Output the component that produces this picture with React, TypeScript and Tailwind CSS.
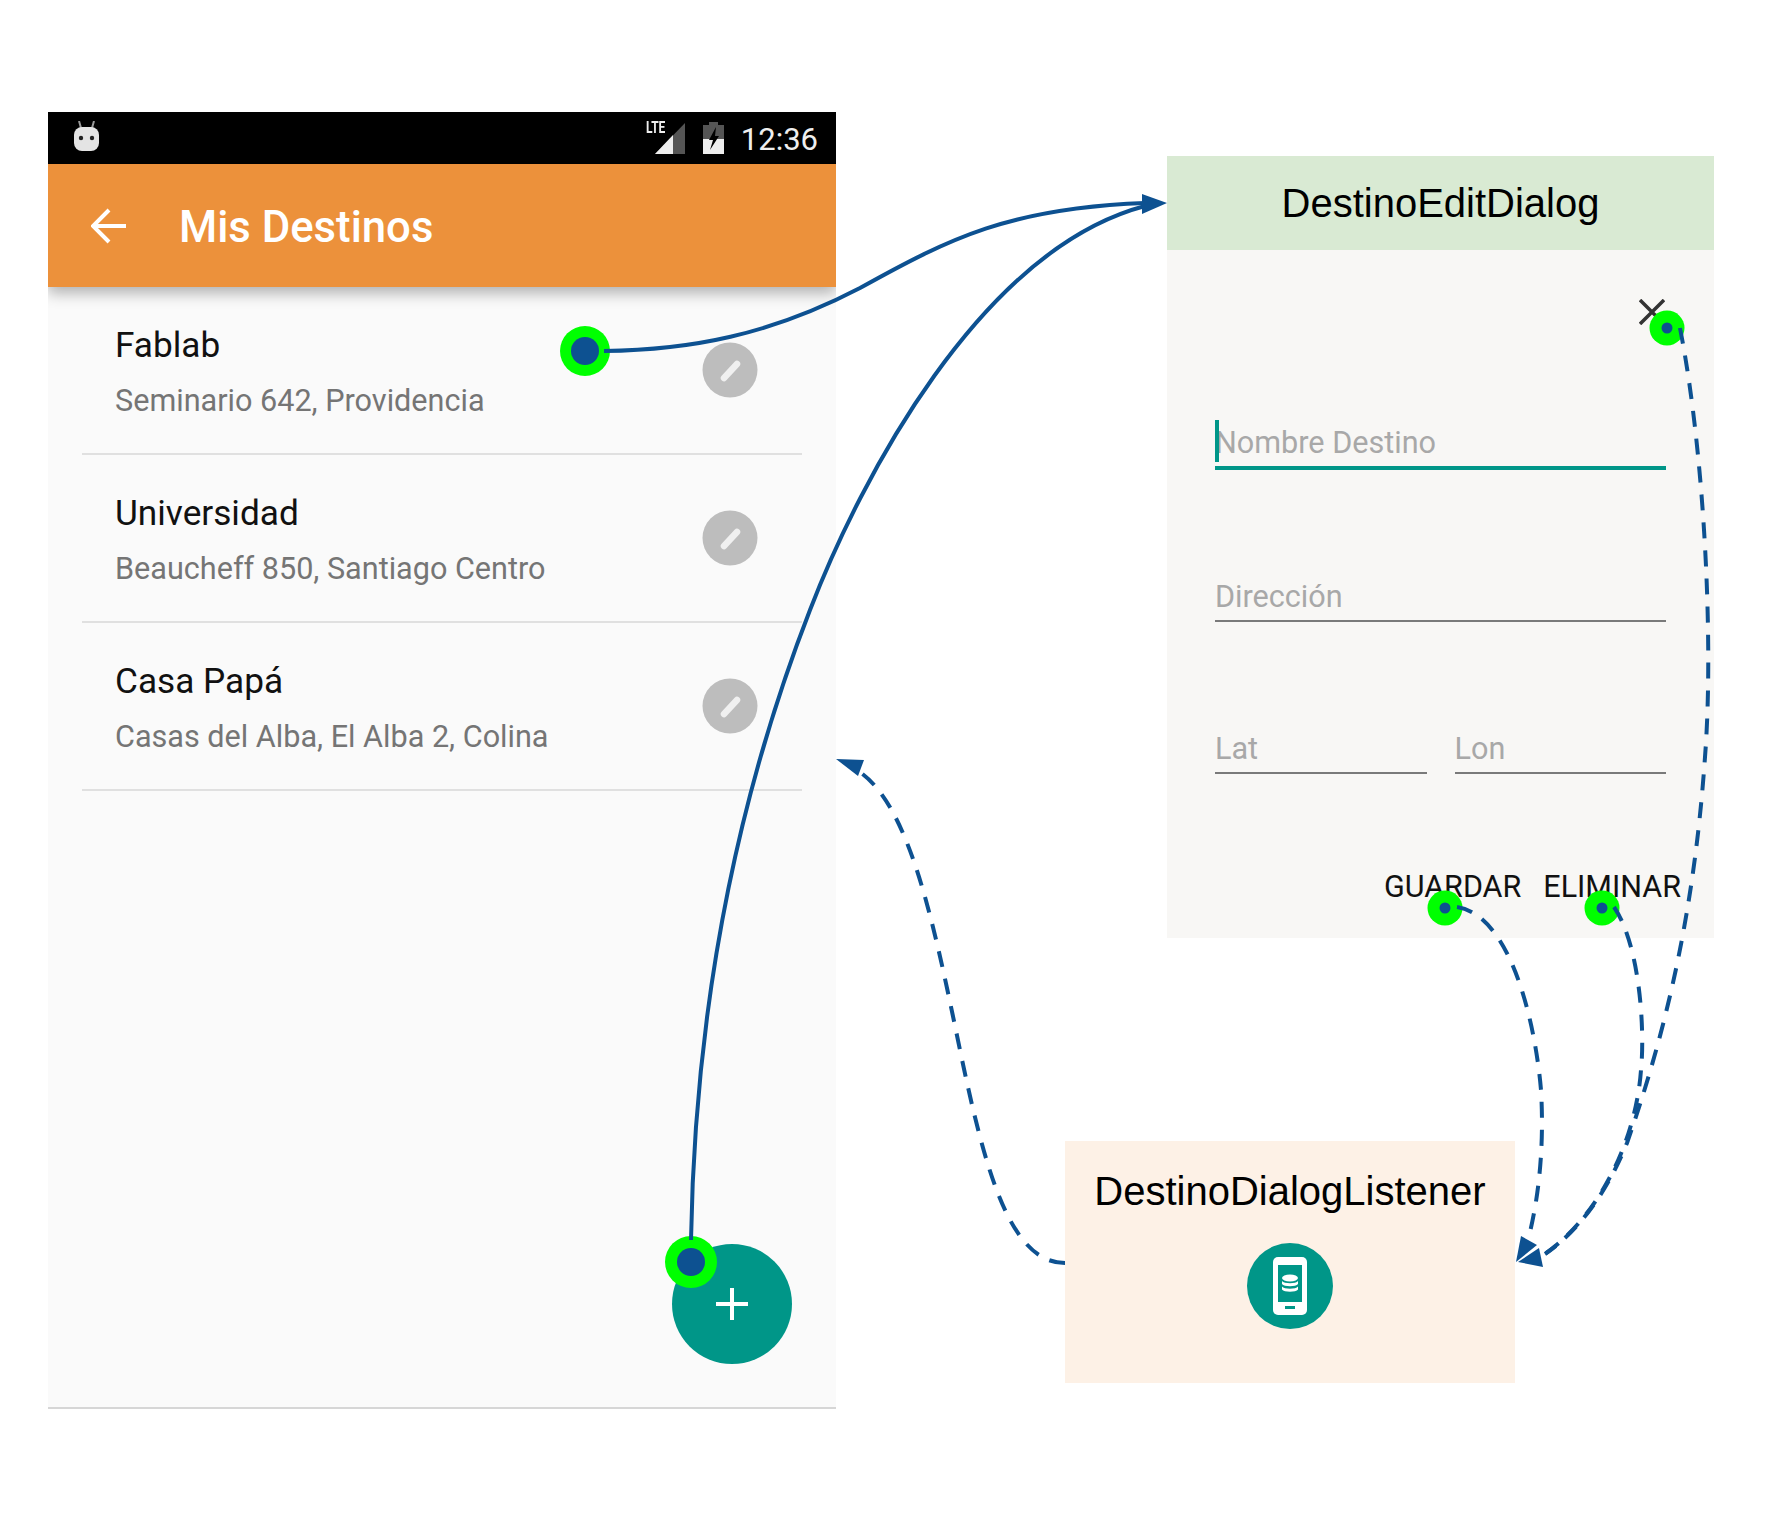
const DESTINOS = [
  { name: 'Fablab', address: 'Seminario 642, Providencia' },
  { name: 'Universidad', address: 'Beaucheff 850, Santiago Centro' },
  { name: 'Casa Papá', address: 'Casas del Alba, El Alba 2, Colina' },
]

const BLUE = '#0d5191'
const DASH = '16 12'

const WIRE_FABLAB = 'M604 351 C690 350 770 335 860 288 C950 238 1010 208 1145 203'
const WIRE_FAB = 'M691 1240 C695 1000 740 790 810 610 C860 480 980 250 1145 206'
const WIRE_BACK = 'M1065 1263 C1010 1263 985 1170 960 1050 C935 930 910 800 855 769'
const WIRE_CLOSE = 'M1680 328 C1704 450 1714 640 1705 757 C1695 900 1670 1020 1627 1143 C1608 1190 1580 1230 1545 1254'
const WIRE_GUARDAR = 'M1457 907 C1510 915 1535 1020 1541 1090 C1544 1140 1540 1190 1530 1232'
const WIRE_ELIMINAR = 'M1614 907 C1640 945 1645 1030 1641 1070 C1636 1140 1600 1215 1545 1254'

function StatusBar() {
  return (
    <div className="h-[52px] shrink-0 bg-black flex items-center pl-[26px] pr-[18px] relative z-10">
      <svg width="25" height="30" viewBox="0 0 25 30" className="shrink-0 mb-[5px]">
        <path d="M7 7 L5 0 M18 7 L20 0" stroke="#9a9a9a" strokeWidth="2" />
        <rect x="0" y="6" width="25" height="24" rx="8" fill="#e4e4e4" />
        <circle cx="7" cy="17" r="2.2" fill="#222" />
        <circle cx="18" cy="17" r="2.2" fill="#222" />
      </svg>
      <div className="flex-1" />
      <div className="relative w-[39px] h-[32px] mr-[18px]">
        <svg width="39" height="32" viewBox="0 0 39 32" className="absolute left-0 top-0">
          <path d="M9 32 L39 1 V32 Z" fill="#555" />
          <path d="M9 32 L27 13 V32 Z" fill="#eee" />
        </svg>
        <span className="absolute left-0 -top-[4px] text-[16px] leading-[20px] font-bold text-[#eee] font-['Roboto'] scale-x-[0.75] origin-left">LTE</span>
      </div>
      <svg width="21" height="32" viewBox="0 0 21 32" className="shrink-0 mr-[17px]">
        <path d="M6 0 H15 V3 H21 V32 H0 V3 H6 Z" fill="#555" />
        <path d="M0 17 H21 V32 H0 Z" fill="#eee" />
        <path d="M13 5 L6 18 H10 L7 28 L16 14 H12 Z" fill="#000" />
      </svg>
      <span className="text-[31px] leading-none pt-[2px] text-[#eee] font-['Roboto']">12:36</span>
    </div>
  )
}

function ToolBar() {
  return (
    <div className="h-[123px] shrink-0 bg-[#ec913b] flex items-center pl-[43px] shadow-[0_6px_14px_rgba(0,0,0,0.3)] relative z-[5]">
      <svg width="36" height="36" viewBox="0 0 36 36" className="shrink-0 mr-[52px]">
        <path d="M35 18 H3 M18 2 L2 18 L18 34" fill="none" stroke="#fff" strokeWidth="4" />
      </svg>
      <span className="text-[43.7px] pt-[4px] font-medium text-white font-['Roboto']">Mis Destinos</span>
    </div>
  )
}

function EditIcon() {
  return (
    <svg width="56" height="56" viewBox="0 0 56 56" className="shrink-0 blur-[0.6px]">
      <circle cx="28" cy="28" r="27.5" fill="#bdbdbd" />
      <path d="M22 36 L35 22" stroke="#f0f0f0" strokeWidth="6.5" strokeLinecap="round" />
    </svg>
  )
}

function DestinoRow({ name, address }: { name: string; address: string }) {
  return (
    <div className="h-[168px] first:h-[166px] mx-[34px] pl-[33px] pr-[44px] border-b-2 border-[#e0e0e0] flex items-center justify-between">
      <div className="flex flex-col gap-[20px] pt-[6px]">
        <span className="text-[35.2px] leading-[36px] text-[#111] font-['Roboto']">{name}</span>
        <span className="text-[30.6px] leading-[36px] text-[#757575] font-['Roboto']">{address}</span>
      </div>
      <EditIcon />
    </div>
  )
}

function MisDestinos() {
  return (
    <div className="absolute left-[48px] top-[112px] w-[788px] h-[1297px] bg-[#fafafa] border-b-2 border-[#d6d6d6] flex flex-col overflow-hidden">
      <StatusBar />
      <ToolBar />
      {DESTINOS.map((d) => (
        <DestinoRow key={d.name} {...d} />
      ))}
      <div className="absolute left-[624px] top-[1132px] w-[120px] h-[120px] rounded-full bg-[#009688] flex items-center justify-center">
        <svg width="32" height="32" viewBox="0 0 32 32">
          <path d="M16 0 V32 M0 16 H32" stroke="#fff" strokeWidth="4" />
        </svg>
      </div>
    </div>
  )
}

function Field({ label, active, className }: { label: string; active?: boolean; className?: string }) {
  return (
    <div
      className={
        'relative h-[50px] flex items-end pb-[5px] text-[30.6px] leading-[36px] text-[#a8a8a8] font-[\'Roboto\'] ' +
        (active ? 'border-b-4 border-[#009688] ' : 'border-b-2 border-[#7a7a7a] ') +
        (className ?? '')
      }
    >
      {active && <span className="absolute left-0 bottom-[4px] w-1 h-[42px] bg-[#009688]" />}
      <span>{label}</span>
    </div>
  )
}

function EditDialog() {
  return (
    <div className="absolute left-[1167px] top-[156px] w-[547px] h-[782px] bg-[#f8f7f5] flex flex-col">
      <div className="h-[94px] shrink-0 bg-[#d9ead3] flex items-center justify-center text-[40px] text-black font-['Liberation_Sans']">
        DestinoEditDialog
      </div>
      <div className="flex-1 flex flex-col px-[48px]">
        <div className="flex justify-end pt-[49px] pr-[1px]">
          <svg width="26" height="26" viewBox="0 0 26 26" className="blur-[0.5px]">
            <path d="M1 1 L25 25 M25 1 L1 25" stroke="#333" strokeWidth="3.5" />
          </svg>
        </div>
        <Field label="Nombre Destino" active className="mt-[95px]" />
        <Field label="Dirección" className="mt-[102px]" />
        <div className="flex gap-[28px] mt-[102px]">
          <Field label="Lat" className="flex-1" />
          <Field label="Lon" className="flex-1" />
        </div>
        <div className="flex justify-end gap-[22px] mt-[95px] -mr-[15px] text-[30.5px] leading-[36px] text-[#111] font-['Roboto']">
          <span>GUARDAR</span>
          <span>ELIMINAR</span>
        </div>
      </div>
    </div>
  )
}

function DialogListener() {
  return (
    <div className="absolute left-[1065px] top-[1141px] w-[450px] h-[242px] bg-[#fdf1e6] flex flex-col items-center pt-[27px]">
      <span className="text-[40px] leading-[46px] text-black font-['Liberation_Sans']">DestinoDialogListener</span>
      <div className="mt-[29px] w-[86px] h-[86px] rounded-full bg-[#009688] flex items-center justify-center">
        <svg width="34" height="58" viewBox="0 0 34 58">
          <rect width="34" height="58" rx="5" fill="#fff" />
          <rect x="5" y="8" width="24" height="37" fill="#009688" />
          <rect x="12" y="49" width="10" height="3" fill="#009688" />
          <ellipse cx="17" cy="21" rx="8" ry="3.5" fill="#fff" />
          <path d="M9 24 C11 27 23 27 25 24 V27 C23 30 11 30 9 27 Z" fill="#fff" />
          <path d="M9 29.5 C11 32.5 23 32.5 25 29.5 V32.5 C23 35.5 11 35.5 9 32.5 Z" fill="#fff" />
        </svg>
      </div>
    </div>
  )
}

function Dot({ cx, cy, r, inner }: { cx: number; cy: number; r: number; inner: number }) {
  return (
    <>
      <circle cx={cx} cy={cy} r={r} fill="#00ff00" />
      <circle cx={cx} cy={cy} r={inner} fill={BLUE} />
    </>
  )
}

// flechas y puntos del diagrama, encima de las pantallas
function Wires() {
  return (
    <svg width="1770" height="1520" viewBox="0 0 1770 1520" className="absolute left-0 top-0 pointer-events-none">
      <Dot cx={585} cy={351} r={25} inner={14} />
      <Dot cx={691} cy={1262} r={26} inner={14} />
      <Dot cx={1667} cy={328} r={17.5} inner={5.5} />
      <Dot cx={1445} cy={908} r={17.5} inner={5.5} />
      <Dot cx={1602} cy={908} r={17.5} inner={5.5} />
      <g fill="none" stroke={BLUE} strokeWidth="4">
        <path d={WIRE_FABLAB} />
        <path d={WIRE_FAB} />
        <g strokeDasharray={DASH}>
          <path d={WIRE_BACK} />
          <path d={WIRE_CLOSE} />
          <path d={WIRE_GUARDAR} />
          <path d={WIRE_ELIMINAR} />
        </g>
      </g>
      <g fill={BLUE}>
        <path d="M1167 203 L1142 194 V214 Z" />
        <path d="M836 759 L864 760 L858 776 Z" />
        <path d="M1516 1262 L1521 1236 L1537 1245 Z" />
        <path d="M1518 1262 L1539 1248 L1543 1267 Z" />
      </g>
    </svg>
  )
}

export default function App() {
  return (
    <div className="relative w-[1770px] h-[1520px] bg-white overflow-hidden">
      <MisDestinos />
      <EditDialog />
      <DialogListener />
      <Wires />
    </div>
  )
}
